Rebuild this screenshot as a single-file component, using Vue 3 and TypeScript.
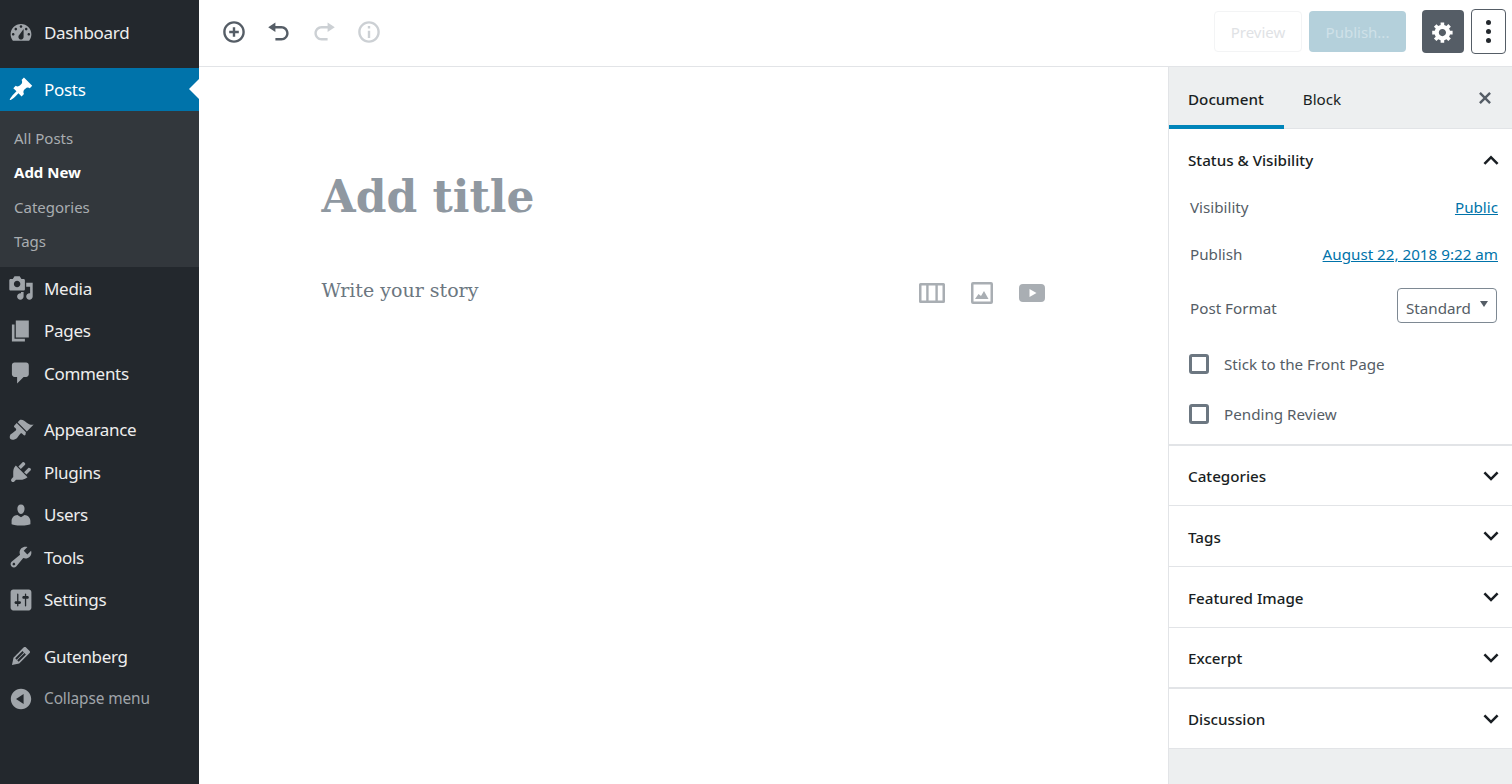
<template>
  <div class="app">
    <nav class="menu">
      <template v-for="group in menuGroups" :key="group[0].label">
        <ul class="menu-group">
          <li v-for="item in group" :key="item.label" :class="{ active: item.active, quiet: item.quiet }">
            <a class="menu-link">
              <svg class="menu-icon" viewBox="0 0 20 20"><path :d="item.icon" fill-rule="evenodd" /></svg>
              <span>{{ item.label }}</span>
            </a>
            <ul v-if="item.active" class="submenu">
              <li v-for="sub in subItems" :key="sub" :class="{ current: sub === 'Add New' }">{{ sub }}</li>
            </ul>
          </li>
        </ul>
      </template>
    </nav>

    <div class="workspace">
      <header class="topbar">
        <div class="tools">
          <svg class="tool" viewBox="0 0 20 20"><path d="M10 1c-5 0-9 4-9 9s4 9 9 9 9-4 9-9-4-9-9-9zm0 16c-3.9 0-7-3.1-7-7s3.1-7 7-7 7 3.1 7 7-3.1 7-7 7zm1-11H9v3H6v2h3v3h2v-3h3V9h-3V6z" /></svg>
          <svg class="tool" viewBox="0 0 20 20"><path d="M12 5H7V2L1 6l6 4V7h5c2.2 0 4 1.8 4 4s-1.8 4-4 4H7v2h5c3.3 0 6-2.7 6-6s-2.7-6-6-6z" /></svg>
          <svg class="tool off" viewBox="0 0 20 20"><path d="M8 5h5V2l6 4-6 4V7H8c-2.2 0-4 1.8-4 4s1.8 4 4 4h5v2H8c-3.3 0-6-2.7-6-6s2.7-6 6-6z" /></svg>
          <svg class="tool off" viewBox="0 0 20 20"><path d="M10 1c-5 0-9 4-9 9s4 9 9 9 9-4 9-9-4-9-9-9zm0 16c-3.9 0-7-3.1-7-7s3.1-7 7-7 7 3.1 7 7-3.1 7-7 7zM9 5h2v2H9zm0 4h2v6H9z" /></svg>
        </div>
        <div class="actions">
          <button class="btn-preview">Preview</button>
          <button class="btn-publish">Publish...</button>
          <button class="btn-gear">
            <svg viewBox="0 0 20 20"><path d="M18 12h-2.18c-.17.7-.44 1.35-.81 1.93l1.54 1.54-2.1 2.1-1.54-1.54c-.58.36-1.23.63-1.91.79V19H8v-2.18c-.68-.16-1.33-.43-1.91-.79l-1.54 1.54-2.12-2.12 1.54-1.54c-.36-.58-.63-1.23-.79-1.91H1V9.03h2.17c.16-.7.44-1.35.8-1.94L2.43 5.55l2.1-2.1 1.54 1.54c.58-.37 1.24-.64 1.93-.81V2h3v2.18c.68.16 1.33.43 1.91.79l1.54-1.54 2.12 2.12-1.54 1.54c.36.59.64 1.24.8 1.94H18V12zm-8.5 1.5c1.66 0 3-1.34 3-3s-1.34-3-3-3-3 1.34-3 3 1.34 3 3 3z" fill-rule="evenodd" /></svg>
          </button>
          <button class="btn-more"><i></i><i></i><i></i></button>
        </div>
      </header>

      <div class="body">
        <main class="editor">
          <h1 class="title">Add title</h1>
          <div class="story">
            <span>Write your story</span>
            <div class="block-icons">
              <svg viewBox="0 0 26 20" width="26" height="20"><path d="M0 1.500A1.500 1.500 0 0 1 1.500 0h23A1.500 1.500 0 0 1 26 1.500v17a1.500 1.500 0 0 1-1.500 1.500h-23A1.500 1.500 0 0 1 0 18.500zM2.500 2.500v15h4.700v-15zm7.100 0v15h6.800v-15zm9.200 0v15h4.700v-15z" fill-rule="evenodd" /></svg>
              <svg viewBox="0 0 24 24" width="24" height="24"><path d="M3 1h18a2 2 0 0 1 2 2v18a2 2 0 0 1-2 2H3a2 2 0 0 1-2-2V3a2 2 0 0 1 2-2zm.500 2.500v17h17v-17zM5 18l3.500-5 2.500 2 3-5 4.500 8z" fill-rule="evenodd" /></svg>
              <svg viewBox="0 0 26 18" width="26" height="18"><path d="M4 0h18a4 4 0 0 1 4 4v10a4 4 0 0 1-4 4H4a4 4 0 0 1-4-4V4a4 4 0 0 1 4-4zm6.500 5v8l7-4z" fill-rule="evenodd" /></svg>
            </div>
          </div>
        </main>

        <aside class="panel">
          <div class="tabs">
            <div class="tab selected">Document</div>
            <div class="tab">Block</div>
            <svg class="close" viewBox="0 0 20 20"><path d="M14.950 6.460L11.410 10l3.540 3.540-1.410 1.410L10 11.420l-3.530 3.530-1.420-1.420L8.580 10 5.050 6.470l1.420-1.420L10 8.580l3.540-3.530z" /></svg>
          </div>

          <section class="status">
            <div class="section-head">
              <h2>Status &amp; Visibility</h2>
              <svg viewBox="0 0 24 24"><path d="M12 7.500l-7.500 7.500 1.800 1.800L12 11.100l5.700 5.700 1.800-1.800z" /></svg>
            </div>
            <div class="row row-visibility"><span>Visibility</span><a>Public</a></div>
            <div class="row row-publish"><span>Publish</span><a>August 22, 2018 9:22 am</a></div>
            <div class="row row-format">
              <span class="format-label">Post Format</span>
              <div class="select">Standard<b></b></div>
            </div>
            <label class="check check-first"><i></i>Stick to the Front Page</label>
            <label class="check"><i></i>Pending Review</label>
          </section>

          <section
            v-for="name in closedSections"
            :key="name.label"
            class="closed"
            :class="{ thick: name.thick }"
            :style="{ height: name.height + 'px' }"
          >
            <h2>{{ name.label }}</h2>
            <svg viewBox="0 0 24 24"><path d="M12 16.800L4.500 9.300l1.800-1.800 5.700 5.700 5.700-5.700 1.800 1.800z" /></svg>
          </section>
        </aside>
      </div>
    </div>
  </div>
</template>

<script setup lang="ts">
interface MenuItem {
  label: string
  icon: string
  active?: boolean
  quiet?: boolean
}

const icons = {
  dashboard: 'M3.76 16h12.48c1.1-1.37 1.76-3.11 1.76-5 0-4.42-3.58-8-8-8s-8 3.58-8 8c0 1.89.66 3.63 1.76 5zM10 4c.55 0 1 .45 1 1s-.45 1-1 1-1-.45-1-1 .45-1 1-1zM6 6c.55 0 1 .45 1 1s-.45 1-1 1-1-.45-1-1 .45-1 1-1zm8 0c.55 0 1 .45 1 1s-.45 1-1 1-1-.45-1-1 .45-1 1-1zm-5.370 5.550L12 7v6c0 1.100-.9 2-2 2s-2-.9-2-2c0-.57.24-1.080.63-1.450zM4 10c.55 0 1 .45 1 1s-.45 1-1 1-1-.45-1-1 .45-1 1-1zm12 0c.55 0 1 .45 1 1s-.45 1-1 1-1-.45-1-1 .45-1 1-1z',
  pin: 'M10.440 3.020l1.820-1.820 6.360 6.350-1.830 1.820c-1.050-.68-2.480-.57-3.410.36l-.75.75c-.92.93-1.040 2.350-.35 3.410l-1.830 1.820-2.410-2.410-2.800 2.790c-.42.42-3.380 2.710-3.800 2.290s1.860-3.390 2.280-3.810l2.790-2.790L4.100 9.360l1.830-1.820c1.050.69 2.480.57 3.400-.36l.75-.75c.93-.92 1.050-2.350.36-3.410z',
  media: 'M13 11V4c0-.55-.45-1-1-1h-1.670L9 1H5L3.670 3H2c-.55 0-1 .45-1 1v7c0 .55.45 1 1 1h10c.55 0 1-.45 1-1zM7 4.500c1.380 0 2.500 1.120 2.500 2.500S8.380 9.500 7 9.500 4.500 8.380 4.500 7 5.620 4.500 7 4.500zM14 6h5v10.500c0 1.380-1.120 2.500-2.500 2.500S14 17.880 14 16.500s1.120-2.500 2.500-2.500c.17 0 .34.02.5.05V9h-3V6zm-4 8.050V13h2v3.500c0 1.380-1.120 2.500-2.500 2.500S7 17.880 7 16.500 8.120 14 9.500 14c.17 0 .34.02.5.05z',
  pages: 'M6 15V2h10v13H6zm-1 1h8v2H3V5h2v11z',
  comments: 'M5 2h9c1.100 0 2 .9 2 2v7c0 1.100-.9 2-2 2h-2l-5 5v-5H5c-1.100 0-2-.9-2-2V4c0-1.100.9-2 2-2z',
  appearance: 'M14.480 11.060L7.410 3.990l1.500-1.500c.5-.56 2.300-.47 3.510.32 1.210.8 1.430 1.280 2.910 2.100 1.180.64 2.450 1.260 4.450.85zm-.71.71L6.700 4.700 4.930 6.470c-.39.39-.39 1.020 0 1.410l1.060 1.060c.39.39.39 1.030 0 1.420-.6.6-1.430 1.110-2.210 1.690-.35.26-.7.53-1.010.84C1.430 13.230.91 15.950 1.910 16.950s3.700.53 5.060-.87c.31-.31.58-.66.85-1.020.57-.78 1.080-1.610 1.690-2.210.39-.39 1.020-.39 1.410 0l1.060 1.060c.39.39 1.020.39 1.410 0z',
  plugins: 'M13.110 4.360L9.870 7.600 8 5.730l3.240-3.240c.35-.34 1.050-.2 1.560.32.52.51.66 1.210.31 1.550zm-8 1.770l.91-1.120 9.010 9.010-1.190.84c-.71.71-2.630 1.160-3.820 1.160H6.140L4.900 17.260c-.59.59-1.540.59-2.120 0-.59-.58-.59-1.530 0-2.120l1.240-1.240v-3.880c0-1.130.4-3.190 1.090-3.890zm7.260 3.970l3.240-3.240c.34-.35 1.040-.21 1.550.31.52.51.66 1.210.31 1.550l-3.240 3.250z',
  users: 'M10 9.250c-2.270 0-2.730-3.440-2.730-3.440C7 4.020 7.820 2 9.970 2c2.160 0 2.980 2.020 2.710 3.810 0 0-.41 3.440-2.680 3.440zm0 2.570L12.720 10c2.390 0 4.520 2.330 4.520 4.530v2.490s-3.650 1.130-7.240 1.130c-3.650 0-7.240-1.130-7.240-1.130v-2.490c0-2.250 1.940-4.480 4.470-4.480z',
  tools: 'M16.680 9.770c-1.340 1.340-3.300 1.670-4.950.99l-5.410 6.520c-.99.99-2.590.99-3.580 0s-.99-2.590 0-3.570l6.520-5.420c-.68-1.650-.35-3.610.99-4.950 1.280-1.280 3.120-1.620 4.720-1.060l-2.890 2.890 2.820 2.820 2.860-2.870c.53 1.580.18 3.390-1.080 4.650zM3.810 16.210c.4.39 1.040.39 1.430 0 .4-.4.4-1.040 0-1.430-.39-.4-1.030-.4-1.430 0-.39.39-.39 1.030 0 1.430z',
  settings: 'M18 16V4c0-1.100-.9-2-2-2H4c-1.100 0-2 .9-2 2v12c0 1.100.9 2 2 2h12c1.100 0 2-.9 2-2zM8 11h1c.55 0 1 .45 1 1s-.45 1-1 1H8v1.500c0 .28-.22.5-.5.5s-.5-.22-.5-.5V13H6c-.55 0-1-.45-1-1s.45-1 1-1h1V5.500c0-.28.22-.5.5-.5s.5.22.5.5V11zm5-2h-1c-.55 0-1-.45-1-1s.45-1 1-1h1V5.500c0-.28.22-.5.5-.5s.5.22.5.5V7h1c.55 0 1 .45 1 1s-.45 1-1 1h-1v5.500c0 .28-.22.5-.5.5s-.5-.22-.5-.5V9z',
  pencil: 'M13.890 3.390l2.710 2.720c.46.46.42 1.240.03 1.640l-8.010 8.020-5.560 1.160 1.160-5.580s7.600-7.630 7.990-8.030c.39-.39 1.220-.39 1.680.07zm-2.730 2.790l-5.590 5.610 1.110 1.110 5.540-5.650zm-2.970 8.230l5.580-5.600-1.070-1.080-5.590 5.600z',
  collapse: 'M10 2.160c4.330 0 7.840 3.510 7.840 7.840s-3.510 7.840-7.840 7.840S2.160 14.330 2.160 10 5.710 2.160 10 2.160zm2 11.720V6.120L6.180 9.970z',
}

const menuGroups: MenuItem[][] = [
  [{ label: 'Dashboard', icon: icons.dashboard }],
  [{ label: 'Posts', icon: icons.pin, active: true }, { label: 'Media', icon: icons.media }, { label: 'Pages', icon: icons.pages }, { label: 'Comments', icon: icons.comments }],
  [{ label: 'Appearance', icon: icons.appearance }, { label: 'Plugins', icon: icons.plugins }, { label: 'Users', icon: icons.users }, { label: 'Tools', icon: icons.tools }, { label: 'Settings', icon: icons.settings }],
  [{ label: 'Gutenberg', icon: icons.pencil }, { label: 'Collapse menu', icon: icons.collapse, quiet: true }],
]

const subItems = ['All Posts', 'Add New', 'Categories', 'Tags']

const closedSections = [
  { label: 'Categories', height: 60 },
  { label: 'Tags', height: 61 },
  { label: 'Featured Image', height: 61 },
  { label: 'Excerpt', height: 61, thick: true },
  { label: 'Discussion', height: 60 },
]
</script>

<style>
html, body {
  margin: 0;
  overflow: hidden;
}
</style>

<style scoped>
.app {
  display: flex;
  height: 784px;
  font-family: "Noto Sans", "Open Sans", sans-serif;
  background: #fff;
}

.menu {
  width: 199px;
  flex: none;
  background: #23282d;
  padding-top: 11.500px;
  box-sizing: border-box;
  color: #eee;
}

.menu-group {
  list-style: none;
  margin: 0 0 14px;
  padding: 0;
}

.menu-link {
  display: flex;
  align-items: center;
  height: 42.500px;
  padding-left: 8px;
  gap: 10px;
  font-size: 17px;
  letter-spacing: -0.3px;
}

.menu-icon {
  width: 26px;
  height: 26px;
  fill: #a0a5aa;
  flex: none;
}

.active > .menu-link {
  position: relative;
  background: #0073aa;
  color: #fff;
}

.active .menu-icon {
  fill: #fff;
}

.active > .menu-link::after {
  content: "";
  position: absolute;
  right: 0;
  top: 50%;
  margin-top: -10px;
  border: 10px solid transparent;
  border-left-width: 0;
  border-right-color: #fff;
}

.quiet .menu-link {
  color: #a0a5aa;
  font-size: 15.400px;
  letter-spacing: -0.1px;
}

.submenu {
  list-style: none;
  margin: 0;
  padding: 10px 0 8px 14px;
  background: #32373c;
  color: #a9adb1;
  font-size: 15px;
}

.submenu li {
  height: 34.600px;
  line-height: 34.600px;
}

.submenu .current {
  color: #fff;
  font-weight: 700;
}

.workspace {
  flex: 1;
  min-width: 0;
  display: flex;
  flex-direction: column;
}

.topbar {
  height: 67px;
  flex: none;
  box-sizing: border-box;
  border-bottom: 1px solid #e2e4e7;
  display: flex;
  justify-content: space-between;
  padding: 0 6px 0 23px;
}

.tools {
  display: flex;
  align-items: center;
  gap: 21px;
  padding-bottom: 3px;
}

.tool {
  width: 24px;
  height: 24px;
  fill: #555d66;
}

.tool.off {
  fill: #ccd0d4;
}

.actions {
  display: flex;
  align-items: center;
  padding-bottom: 3px;
}

.actions button {
  font-family: inherit;
  padding: 0;
  box-sizing: border-box;
}

.btn-preview {
  width: 88px;
  height: 41px;
  font-size: 15px;
  border: 1px solid #f3f4f5;
  border-radius: 4px;
  background: #fff;
  color: #e0e2e5;
  margin-right: 7px;
}

.btn-publish {
  width: 97px;
  height: 41px;
  font-size: 15px;
  border: 0;
  border-radius: 4px;
  background: #b4d0db;
  color: #cfe1e8;
  margin-right: 16px;
}

.btn-gear {
  width: 42px;
  height: 43px;
  border: 0;
  border-radius: 4px;
  background: #555d66;
  margin-right: 7px;
  display: flex;
  align-items: center;
  justify-content: center;
}

.btn-gear svg {
  width: 24px;
  height: 24px;
  fill: #fff;
}

.btn-more {
  width: 35px;
  height: 45px;
  border: 1px solid #555d66;
  border-radius: 4px;
  background: #fff;
  display: flex;
  flex-direction: column;
  align-items: center;
  justify-content: center;
  gap: 4px;
}

.btn-more i {
  width: 5px;
  height: 5px;
  border-radius: 50%;
  background: #23282d;
}

.body {
  flex: 1;
  min-height: 0;
  display: flex;
}

.editor {
  flex: 1;
  min-width: 0;
  padding: 97px 123px 0 122.500px;
  font-family: "DejaVu Serif", "Liberation Serif", serif;
}

.title {
  margin: 0;
  font-size: 44px;
  line-height: 66px;
  font-weight: 700;
  color: #8f98a1;
}

.story {
  display: flex;
  justify-content: space-between;
  align-items: center;
  margin-top: 45px;
  font-size: 19px;
  color: #6c7781;
}

.block-icons {
  display: flex;
  align-items: center;
  gap: 25px;
  padding-top: 6px;
  fill: #a9aeb3;
}

.panel {
  width: 344px;
  flex: none;
  box-sizing: border-box;
  border-left: 1px solid #e2e4e7;
  background: #edeff0;
  color: #191e23;
}

.tabs {
  display: flex;
  align-items: flex-start;
  height: 62px;
  box-sizing: border-box;
  border-bottom: 1px solid #e2e4e7;
}

.tab {
  height: 62px;
  box-sizing: border-box;
  line-height: 65px;
  font-size: 15.200px;
  padding: 0 19px;
}

.tab.selected {
  font-weight: 500;
  padding-right: 20px;
  border-bottom: 4px solid #0085ba;
}

.close {
  width: 24px;
  height: 24px;
  fill: #555d66;
  margin: 19px 15px 0 auto;
}

section {
  background: #fff;
  border-bottom: 1px solid #e2e4e7;
  box-sizing: border-box;
}

h2 {
  margin: 0;
  font-size: 15.200px;
  font-weight: 500;
}

section svg {
  width: 24px;
  height: 24px;
  fill: #191e23;
}

.status {
  height: 317px;
  padding: 0 14px 0 21px;
  color: #555d66;
  font-size: 15.200px;
  border-bottom-width: 2px;
}

.section-head {
  display: flex;
  justify-content: space-between;
  align-items: center;
  height: 61px;
  margin-left: -2px;
  margin-right: -5px;
  color: #191e23;
}

.row {
  display: flex;
  justify-content: space-between;
  align-items: center;
}

.row a {
  color: #0073aa;
  text-decoration: underline;
}

.row-visibility {
  margin-top: 4px;
  height: 26px;
}

.row-publish {
  margin-top: 21px;
  height: 26px;
}

.row-format {
  margin-top: 21px;
  height: 35px;
}

.format-label {
  padding-top: 5px;
}

.select {
  box-sizing: border-box;
  width: 100px;
  height: 35px;
  margin-right: 1px;
  padding: 5px 8px 0;
  border: 1px solid #7e8993;
  border-radius: 4px;
  display: flex;
  align-items: center;
  justify-content: space-between;
}

.select b {
  border: 4px solid transparent;
  border-top: 6px solid #555d66;
  border-bottom: 0;
  margin-bottom: 8px;
}

.check {
  display: flex;
  align-items: center;
  gap: 15px;
  height: 24px;
  margin-top: 26px;
  margin-left: -1px;
}

.check-first {
  margin-top: 29px;
}

.check i {
  width: 20px;
  height: 20px;
  box-sizing: border-box;
  border: 3px solid #6c7781;
  border-radius: 3px;
}

.closed {
  display: flex;
  justify-content: space-between;
  align-items: center;
  padding: 0 9px 0 19px;
}

.closed h2 {
  padding-top: 1px;
}

.closed.thick {
  border-bottom-width: 2px;
}
</style>
